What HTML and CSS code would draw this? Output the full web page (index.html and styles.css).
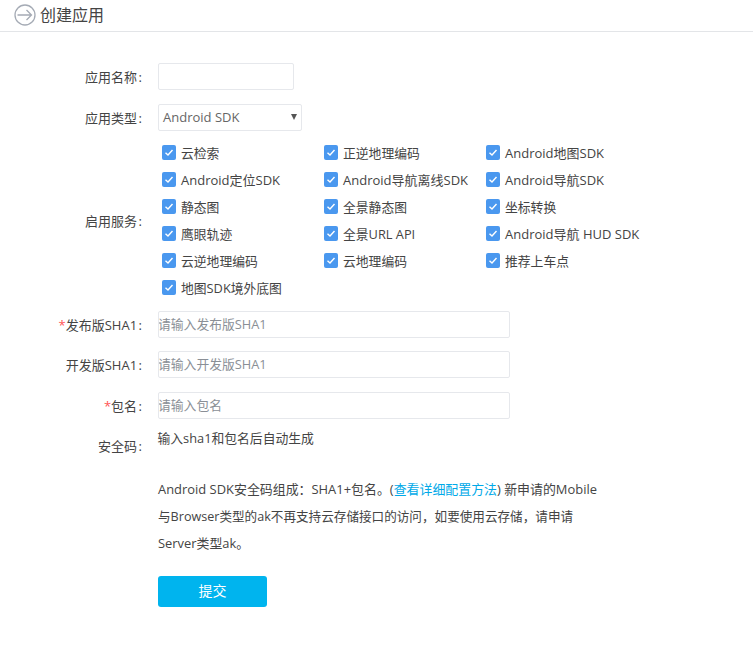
FILE: index.html
```html
<!DOCTYPE html>
<html lang="zh-CN">
<head>
<meta charset="utf-8">
<title>创建应用</title>
<link rel="stylesheet" href="styles.css">
</head>
<body>
<header class="page-head">
  <svg class="head-icon" width="22" height="22" viewBox="0 0 22 22" fill="none" stroke="#a5abb5" stroke-width="1.300"><circle cx="11" cy="11" r="10"/><path d="M3.500 11h14M12.500 6 17.500 11l-5 5"/></svg>
  <h1 class="head-title">创建应用</h1>
</header>
<form class="form">
  <div class="row row-name">
    <label class="label">应用名称<span class="colon">:</span></label>
    <input class="input input-short" type="text">
  </div>
  <div class="row row-type">
    <label class="label">应用类型<span class="colon">:</span></label>
    <div class="select"><span>Android SDK</span><i class="caret"></i></div>
  </div>
  <div class="row row-services">
    <label class="label">启用服务<span class="colon">:</span></label>
    <div class="services">
      <div class="svc"><i class="check"><svg width="14" height="15" viewBox="0 0 14 15" fill="none" stroke="#fff" stroke-width="1.400"><path d="M3.500 7.700 6 10l4.500-5"/></svg></i>云检索</div>
      <div class="svc"><i class="check"><svg width="14" height="15" viewBox="0 0 14 15" fill="none" stroke="#fff" stroke-width="1.400"><path d="M3.500 7.700 6 10l4.500-5"/></svg></i>正逆地理编码</div>
      <div class="svc svc-wide"><i class="check"><svg width="14" height="15" viewBox="0 0 14 15" fill="none" stroke="#fff" stroke-width="1.400"><path d="M3.500 7.700 6 10l4.500-5"/></svg></i>Android地图SDK</div>
      <div class="svc svc-wide"><i class="check"><svg width="14" height="15" viewBox="0 0 14 15" fill="none" stroke="#fff" stroke-width="1.400"><path d="M3.500 7.700 6 10l4.500-5"/></svg></i>Android定位SDK</div>
      <div class="svc svc-wide"><i class="check"><svg width="14" height="15" viewBox="0 0 14 15" fill="none" stroke="#fff" stroke-width="1.400"><path d="M3.500 7.700 6 10l4.500-5"/></svg></i>Android导航离线SDK</div>
      <div class="svc svc-wide"><i class="check"><svg width="14" height="15" viewBox="0 0 14 15" fill="none" stroke="#fff" stroke-width="1.400"><path d="M3.500 7.700 6 10l4.500-5"/></svg></i>Android导航SDK</div>
      <div class="svc"><i class="check"><svg width="14" height="15" viewBox="0 0 14 15" fill="none" stroke="#fff" stroke-width="1.400"><path d="M3.500 7.700 6 10l4.500-5"/></svg></i>静态图</div>
      <div class="svc"><i class="check"><svg width="14" height="15" viewBox="0 0 14 15" fill="none" stroke="#fff" stroke-width="1.400"><path d="M3.500 7.700 6 10l4.500-5"/></svg></i>全景静态图</div>
      <div class="svc"><i class="check"><svg width="14" height="15" viewBox="0 0 14 15" fill="none" stroke="#fff" stroke-width="1.400"><path d="M3.500 7.700 6 10l4.500-5"/></svg></i>坐标转换</div>
      <div class="svc"><i class="check"><svg width="14" height="15" viewBox="0 0 14 15" fill="none" stroke="#fff" stroke-width="1.400"><path d="M3.500 7.700 6 10l4.500-5"/></svg></i>鹰眼轨迹</div>
      <div class="svc"><i class="check"><svg width="14" height="15" viewBox="0 0 14 15" fill="none" stroke="#fff" stroke-width="1.400"><path d="M3.500 7.700 6 10l4.500-5"/></svg></i>全景URL API</div>
      <div class="svc svc-wide"><i class="check"><svg width="14" height="15" viewBox="0 0 14 15" fill="none" stroke="#fff" stroke-width="1.400"><path d="M3.500 7.700 6 10l4.500-5"/></svg></i>Android导航 HUD SDK</div>
      <div class="svc"><i class="check"><svg width="14" height="15" viewBox="0 0 14 15" fill="none" stroke="#fff" stroke-width="1.400"><path d="M3.500 7.700 6 10l4.500-5"/></svg></i>云逆地理编码</div>
      <div class="svc"><i class="check"><svg width="14" height="15" viewBox="0 0 14 15" fill="none" stroke="#fff" stroke-width="1.400"><path d="M3.500 7.700 6 10l4.500-5"/></svg></i>云地理编码</div>
      <div class="svc"><i class="check"><svg width="14" height="15" viewBox="0 0 14 15" fill="none" stroke="#fff" stroke-width="1.400"><path d="M3.500 7.700 6 10l4.500-5"/></svg></i>推荐上车点</div>
      <div class="svc"><i class="check"><svg width="14" height="15" viewBox="0 0 14 15" fill="none" stroke="#fff" stroke-width="1.400"><path d="M3.500 7.700 6 10l4.500-5"/></svg></i>地图SDK境外底图</div>
    </div>
  </div>
  <div class="row row-release">
    <label class="label"><em class="req">*</em>发布版SHA1<span class="colon">:</span></label>
    <input class="input input-long" type="text" placeholder="请输入发布版SHA1">
  </div>
  <div class="row row-dev">
    <label class="label">开发版SHA1<span class="colon">:</span></label>
    <input class="input input-long" type="text" placeholder="请输入开发版SHA1">
  </div>
  <div class="row row-pkg">
    <label class="label"><em class="req">*</em>包名<span class="colon">:</span></label>
    <input class="input input-long" type="text" placeholder="请输入包名">
  </div>
  <div class="row row-code">
    <label class="label label-code">安全码<span class="colon">:</span></label>
    <div class="code-text">输入sha1和包名后自动生成</div>
  </div>
  <div class="note">
    <p class="note-line note-line-1">Android SDK安全码组成：SHA1+包名。(<a class="link" href="#">查看详细配置方法</a>) 新申请的Mobile</p>
    <p class="note-line note-line-2">与Browser类型的ak不再支持云存储接口的访问，如要使用云存储，请申请</p>
    <p class="note-line note-line-3">Server类型ak。</p>
  </div>
  <button class="submit" type="button">提交</button>
</form>
</body>
</html>
```
FILE: styles.css
```css
* { box-sizing: border-box; }
html, body { margin: 0; padding: 0; background: #fff; }
body {
  width: 753px;
  height: 655px;
  overflow: hidden;
  font-family: "Open Sans", "Noto Sans CJK SC", sans-serif;
  font-size: 12.8px;
  color: #444;
}
.page-head {
  height: 32px;
  display: flex;
  align-items: center;
  padding: 0 0 2px 14px;
  border-bottom: 1px solid #e3e5e8;
  gap: 4px;
}
.head-title { margin: 0 0 2px; font-size: 16px; font-weight: 400; color: #444; }
.form { padding-top: 31px; }
.row { display: flex; align-items: center; }
.label {
  width: 142px;
  margin-right: 16px;
  text-align: right;
  flex: none;
  font-size: 13px;
}
.colon { margin-left: 1.5px; }
.req { font-style: normal; color: #f55; }
.input {
  height: 27px;
  border: 1px solid #e6e8ec;
  border-radius: 2px;
  background: #fff;
  padding: 0 0 2px;
  text-indent: -1px;
  font: inherit;
  outline: none;
}
.input::placeholder { color: #8a8f96; opacity: 1; }
.input-short { width: 136px; }
.input-long { width: 352px; }
.row-type { margin-top: 14px; }
.select {
  width: 144px;
  height: 27px;
  border: 1px solid #e6e8ec;
  border-radius: 2px;
  display: flex;
  align-items: center;
  justify-content: space-between;
  padding: 0 4px 2px;
  color: #666;
  font-size: 13px;
}
.caret {
  width: 0;
  height: 0;
  border-left: 3px solid transparent;
  border-right: 3px solid transparent;
  border-top: 6px solid #555;
}
.row-services { margin-top: 8px; }
.services {
  display: grid;
  grid-template-columns: repeat(3, 162px);
  grid-auto-rows: 27px;
  margin-left: 4px;
}
.svc { display: flex; align-items: center; gap: 5px; white-space: nowrap; }
.svc-wide { font-size: 13px; }
.check {
  width: 14px;
  height: 15px;
  flex: none;
  background: #4a98ef;
  border-radius: 2px;
  display: block;
}
.check svg { display: block; }
.row-release { margin-top: 10px; }
.row-dev { margin-top: 13px; }
.row-pkg { margin-top: 14px; }
.row-code { margin-top: 10px; align-items: flex-start; }
.label-code { padding-top: 7px; }
.code-text { color: #444; margin-top: -1px; margin-left: -0.5px; }
.note { margin: 21px 0 0 158px; }
.note-line { margin: 0; line-height: 27px; white-space: nowrap; }
.note-line-1 { font-size: 12.93px; }
.note-line-2 { font-size: 12.6px; }
.note-line-3 { font-size: 12.9px; }
.link { color: #00a9e8; text-decoration: none; }
.submit {
  display: block;
  width: 109px;
  height: 31px;
  margin: 19px 0 0 158px;
  padding: 0 0 3px;
  background: #00b4ee;
  border: none;
  border-radius: 3px;
  color: #fff;
  font: inherit;
  font-size: 14px;
}
```
